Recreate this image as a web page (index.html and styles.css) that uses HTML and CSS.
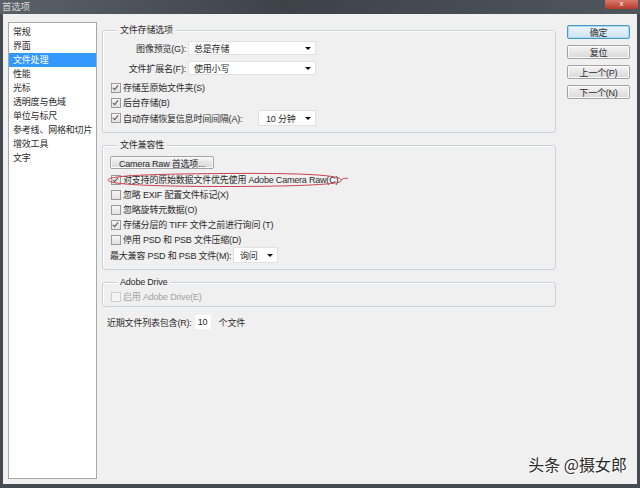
FILE: index.html
```html
<!DOCTYPE html>
<html lang="zh-CN">
<head>
    <meta charset="UTF-8">
    <title>首选项</title>
    <link rel="stylesheet" href="styles.css">
</head>
<body>
<div class="window">
    <div class="titlebar">
        <span class="title">首选项</span>
        <span class="close-btn">x</span>
    </div>

    <div class="frame">
        <ul class="nav-list">
            <li>常规</li>
            <li>界面</li>
            <li class="selected">文件处理</li>
            <li>性能</li>
            <li>光标</li>
            <li>透明度与色域</li>
            <li>单位与标尺</li>
            <li>参考线、网格和切片</li>
            <li>增效工具</li>
            <li>文字</li>
        </ul>

        <div class="main">
            <!-- File saving options -->
            <div class="group group-save">
                <span class="group-title">文件存储选项</span>
                <div class="field-row">
                    <span class="field-label">图像预览(G):</span>
                    <div class="select select-wide">总是存储</div>
                </div>
                <div class="field-row">
                    <span class="field-label">文件扩展名(F):</span>
                    <div class="select select-wide">使用小写</div>
                </div>
                <div class="check-row"><span class="checkbox checked"></span>存储至原始文件夹(S)</div>
                <div class="check-row"><span class="checkbox checked"></span>后台存储(B)</div>
                <div class="field-row autosave-row">
                    <span class="checkbox checked"></span>自动存储恢复信息时间间隔(A):
                    <div class="select select-time">10 分钟</div>
                </div>
            </div>

            <!-- File compatibility -->
            <div class="group group-compat">
                <span class="group-title">文件兼容性</span>
                <button type="button" class="push-btn raw-btn">Camera Raw 首选项...</button>
                <div class="check-row"><span class="checkbox checked"></span>对支持的原始数据文件优先使用 Adobe Camera Raw(C)</div>
                <div class="check-row"><span class="checkbox"></span>忽略 EXIF 配置文件标记(X)</div>
                <div class="check-row"><span class="checkbox"></span>忽略旋转元数据(O)</div>
                <div class="check-row"><span class="checkbox checked"></span>存储分层的 TIFF 文件之前进行询问 (T)</div>
                <div class="check-row"><span class="checkbox"></span>停用 PSD 和 PSB 文件压缩(D)</div>
                <div class="field-row compat-row">
                    最大兼容 PSD 和 PSB 文件(M):
                    <div class="select select-ask">询问</div>
                </div>
                <svg class="mark" width="250" height="20" viewBox="0 0 250 20">
                    <path d="M237 9 C237 3, 180 2, 120 2.5 C60 3, 4 4, 4 9 C4 14, 60 15.5, 120 15.5 C180 15.5, 236 14, 237 10 C238 7, 241 7, 244 7.5" fill="none" stroke="#c8404a" stroke-width="1"/>
                </svg>
            </div>

            <!-- Adobe Drive -->
            <div class="group group-drive">
                <span class="group-title">Adobe Drive</span>
                <div class="check-row disabled"><span class="checkbox"></span>启用 Adobe Drive(E)</div>
            </div>

            <div class="recent-row">
                近期文件列表包含(R):
                <span class="num-input">10</span>
                个文件
            </div>
        </div>

        <div class="buttons">
            <button type="button" class="push-btn default">确定</button>
            <button type="button" class="push-btn">复位</button>
            <button type="button" class="push-btn">上一个(P)</button>
            <button type="button" class="push-btn">下一个(N)</button>
        </div>
    </div>

    <div class="watermark">头条 @摄女郎</div>
</div>
</body>
</html>
```

FILE: styles.css
```css
/* Photoshop preferences dialog, Win7 basic look */
body { margin: 0; font-family: "Liberation Sans", "Noto Sans CJK SC", sans-serif; font-size: 9px; letter-spacing: -0.2px; color: #2a2a2a; }
.window { position: relative; width: 640px; height: 488px; background: #454b53; display: flex; flex-direction: column; overflow: hidden; }

.titlebar { height: 14px; display: flex; align-items: center; justify-content: space-between; background: linear-gradient(to right, #5b6169, #3d4249 45%, #50565e); }
.title { color: #d8d8d8; padding-left: 2px; font-size: 9.5px; line-height: 12px; }
.close-btn { align-self: flex-start; width: 33px; height: 9px; margin-right: 2px; background: linear-gradient(#d9796c, #b73a2c); color: #fff; font-size: 8px; line-height: 8px; text-align: center; border-radius: 0 0 3px 3px; }

.frame { flex: 1; display: flex; margin: 0 3px 4px 3px; padding: 8px 7px 5px 5px; background: #f0f0f0; }

/* left category list */
.nav-list { list-style: none; margin: 0; padding: 2px 0 0 0; width: 87px; background: #fff; border: 1px solid #a8a8a8; }
.nav-list li { height: 14px; line-height: 14px; padding-left: 4px; white-space: nowrap; }
.nav-list li.selected { background: #3399ff; color: #fff; }

.main { width: 454px; margin-left: 5px; margin-top: 8px; }

.group { position: relative; border: 1px solid #cdd2d6; border-radius: 3px; box-shadow: inset 1px 1px 0 #fff; padding: 0 6px 0 7px; }
.group-title { position: absolute; top: -7px; left: 14px; padding: 0 3px; line-height: 12px; background: #f0f0f0; }
.group-save { padding-top: 9px; padding-bottom: 6px; }
.group-compat { margin-top: 12px; padding-top: 10px; padding-bottom: 6px; }
.group-drive { margin-top: 12px; padding-top: 6px; padding-bottom: 2px; }

.field-row { display: flex; align-items: center; height: 16px; white-space: nowrap; }
.group-save .field-row + .field-row,
.group-save .field-row + .check-row { margin-top: 4px; }
.field-label { width: 76px; margin-right: 2px; text-align: right; }
.autosave-row { width: 206px; }
.compat-row { width: 168px; }
.check-row { display: flex; align-items: center; height: 15px; white-space: nowrap; }
.check-row.disabled { color: #a3a3a3; }

.checkbox { position: relative; width: 8px; height: 8px; margin: 0 2px 0 1px; border: 1px solid #9a9a9a; background: linear-gradient(#f4f4f4, #e2e2e2); flex: none; }
.checkbox.checked::after { content: ""; position: absolute; left: 2px; top: 0; width: 2px; height: 5px; border: solid #555; border-width: 0 1.5px 1.5px 0; transform: rotate(40deg); }
.disabled .checkbox { border-color: #cfcfcf; background: #f4f4f4; }

.select { position: relative; height: 14px; line-height: 14px; padding-left: 5px; box-sizing: border-box; background: #fff; border: 1px solid #e2e2e2; flex: none; }
.select::after { content: ""; position: absolute; right: 4px; top: 5px; border-left: 3px solid transparent; border-right: 3px solid transparent; border-top: 3px solid #111; }
.select-wide { width: 128px; }
.select-time { width: 58px; height: 16px; line-height: 16px; margin-left: auto; padding-left: 7px; }
.select-time::after { top: 6px; }
.select-ask { width: 45px; height: 16px; line-height: 16px; margin-left: auto; padding-left: 6px; }
.select-ask::after { top: 6px; }

.push-btn { display: block; height: 14px; padding: 0; font: inherit; letter-spacing: inherit; color: #2a2a2a; border: 1px solid #a3a3a3; border-radius: 2px; background: linear-gradient(#f6f6f6, #e5e5e5 50%, #dadada); box-shadow: inset 0 0 0 1px #fbfbfb; }
.push-btn.default { border-color: #4a98c4; background: linear-gradient(#eef6fb, #dcecf6 50%, #cfe5f2); box-shadow: inset 0 0 0 1px #a9dcf3; }
.raw-btn { width: 104px; height: 13px; margin-bottom: 3px; }

.mark { position: absolute; left: 1px; top: 25px; }

.recent-row { display: flex; align-items: center; height: 14px; margin-top: 8px; padding-left: 5px; white-space: nowrap; }
.num-input { width: 16px; height: 14px; line-height: 14px; margin: 0 8px 0 3px; background: #fff; text-align: center; }

.buttons { width: 63px; margin-left: 11px; margin-top: 3px; display: flex; flex-direction: column; gap: 6px; }
.buttons .push-btn { width: 63px; }

.watermark { position: absolute; right: 13px; bottom: 12px; font-family: "Noto Sans CJK SC", sans-serif; font-size: 16px; letter-spacing: 0; color: #2b2b2b; text-shadow: 1px 1px 0 #fff, -1px 0 0 #fafafa; }
```
